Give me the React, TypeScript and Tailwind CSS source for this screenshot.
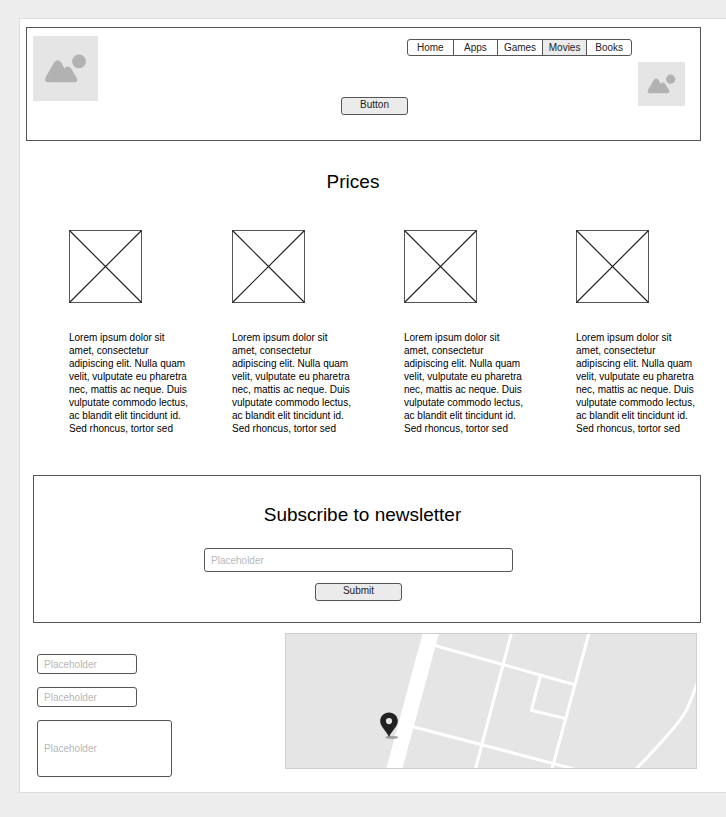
import React from "react";

const NAV_ITEMS = ["Home", "Apps", "Games", "Movies", "Books"];
const ACTIVE_ITEM = "Movies";

const LOREM =
  "Lorem ipsum dolor sit amet, consectetur adipiscing elit. Nulla quam velit, vulputate eu pharetra nec, mattis ac neque. Duis vulputate commodo lectus, ac blandit elit tincidunt id. Sed rhoncus, tortor sed";

function ImagePlaceholder({ className }: { className: string }) {
  return (
    <div className={`shrink-0 bg-[#e5e5e5] ${className}`}>
      <svg viewBox="0 0 65 65" className="block h-full w-full" fill="#b2b2b2" aria-hidden="true">
        <path d="M12.6 41.2 L20.8 27 Q24.7 21.4 28.6 27 L31.4 32.4 Q34.9 28.4 38.2 32.6 L43.8 42.2 Q45.4 46.3 41 46.3 H15.6 Q10.6 46.1 12.6 41.2 Z" />
        <circle cx="46" cy="25.4" r="6.8" />
      </svg>
    </div>
  );
}

function CrossedBox() {
  return (
    <svg viewBox="0 0 73 73" className="block size-[73px]" fill="none" stroke="#222222" aria-hidden="true">
      <rect x="0.5" y="0.5" width="72" height="72" stroke="#555555" />
      <path d="M0.5 0.5 L72.5 72.5 M72.5 0.5 L0.5 72.5" strokeWidth="1.2" />
    </svg>
  );
}

function PriceColumn() {
  return (
    <article>
      <CrossedBox />
      <p className="mt-7 w-[121px] text-[10px] leading-[13px] text-black">{LOREM}</p>
    </article>
  );
}

function LocationMap() {
  return (
    <div className="h-[136px] min-w-0 flex-1 border border-[#cfcfcf] bg-[#e5e5e5]">
      <svg
        viewBox="286 634 410 134"
        preserveAspectRatio="xMidYMid slice"
        className="block h-full w-full"
        fill="none"
        stroke="#ffffff"
        strokeWidth="3"
        role="img"
        aria-label="Map"
      >
        <path d="M422.7 633 H439 L402.3 769 H386.2 Z" fill="#ffffff" stroke="none" />
        <path d="M434 645.2 L574 684.5" />
        <path d="M412 726.5 L500 749.5 L574 769" />
        <path d="M511.4 633 L475.4 769" />
        <path d="M589 633 L552 769" />
        <path d="M540.3 676 L531.4 710.3 L565 718.4" />
        <path d="M697.5 682 C693 695 690 704 684.5 713.5 C680 721 668 736 636 769" />
        <ellipse cx="391.8" cy="737.4" rx="6.4" ry="1.7" fill="#a3a3a3" stroke="none" />
        <path
          d="M389 712.4 C383.9 712.4 380.2 716.2 380.2 721 C380.2 727 386.3 730.5 389 737.2 C391.7 730.5 397.8 727 397.8 721 C397.8 716.2 394.1 712.4 389 712.4 Z M389 718 A3.1 3.1 0 1 1 389 724.2 A3.1 3.1 0 1 1 389 718 Z"
          fill="#222222"
          fillRule="evenodd"
          stroke="none"
        />
      </svg>
    </div>
  );
}

const FIELD =
  "block rounded-[3px] border border-[#555555] bg-white px-1.5 text-[10px] leading-[13px] text-black placeholder:text-[#b8b8b8] outline-none";
const BUTTON =
  "flex h-[18px] justify-center rounded-[3px] border border-[#555555] bg-[#ebebeb] text-[10px] leading-[14px] text-[#222222]";

export default function App() {
  return (
    <div className="min-h-screen bg-[#ededed] pt-[18px] pb-6 pl-[19px] font-['Liberation_Sans',Arial,sans-serif]">
      <main className="border-y border-l border-[#dcdcdc] bg-white pb-[15px]">
        <header className="mt-2 mr-[25px] ml-1.5 flex h-[114px] items-start border border-[#555555] pt-2 pr-[15px] pl-1.5">
          <ImagePlaceholder className="size-[65px]" />
          <div className="ml-[19px] flex flex-1 flex-col items-center pt-[3px]">
            <nav className="grid h-[17px] w-[225px] grid-cols-5 self-end overflow-hidden rounded-[3px] border border-[#555555] text-[10px] leading-[15px] text-[#222222]">
              {NAV_ITEMS.map((item) => (
                <a
                  key={item}
                  href="#"
                  aria-current={item === ACTIVE_ITEM ? "page" : undefined}
                  className="border-l border-[#555555] text-center first:border-l-0 aria-[current=page]:bg-[#ebebeb]"
                >
                  {item}
                </a>
              ))}
            </nav>
            <button type="button" className={`${BUTTON} mt-[41px] w-[67px]`}>
              Button
            </button>
          </div>
          <ImagePlaceholder className="mt-[26px] ml-1.5 h-[44px] w-[47px]" />
        </header>

        <section>
          <h2 className="mt-[29px] pr-10 text-center text-[19px] leading-6 text-black">Prices</h2>
          <div className="mt-9 grid grid-cols-[163fr_172fr_172fr_150fr] pl-[49px]">
            <PriceColumn />
            <PriceColumn />
            <PriceColumn />
            <PriceColumn />
          </div>
        </section>

        <section className="mt-10 mr-[25px] ml-[13px] border border-[#555555] pt-[27px] pb-[21px]">
          <form className="flex flex-col items-center pr-[17px]" onSubmit={(e) => e.preventDefault()}>
            <h2 className="pl-2 text-[19px] leading-6 text-black">Subscribe to newsletter</h2>
            <input
              type="email"
              aria-label="Email"
              placeholder="Placeholder"
              className={`${FIELD} mt-[21px] h-6 w-[309px]`}
            />
            <button type="submit" className={`${BUTTON} mt-[11px] w-[87px]`}>
              Submit
            </button>
          </form>
        </section>

        <section className="mt-2.5 mr-[29px] ml-[17px] flex items-start">
          <form className="flex w-[248px] flex-col gap-[13px] pt-[21px]" onSubmit={(e) => e.preventDefault()}>
            <input type="text" aria-label="Name" placeholder="Placeholder" className={`${FIELD} h-5 w-[100px]`} />
            <input type="text" aria-label="Contact" placeholder="Placeholder" className={`${FIELD} h-5 w-[100px]`} />
            <textarea
              aria-label="Message"
              placeholder="Placeholder"
              className={`${FIELD} h-[57px] w-[135px] resize-none py-[21px]`}
            />
          </form>
          <LocationMap />
        </section>
      </main>
    </div>
  );
}
